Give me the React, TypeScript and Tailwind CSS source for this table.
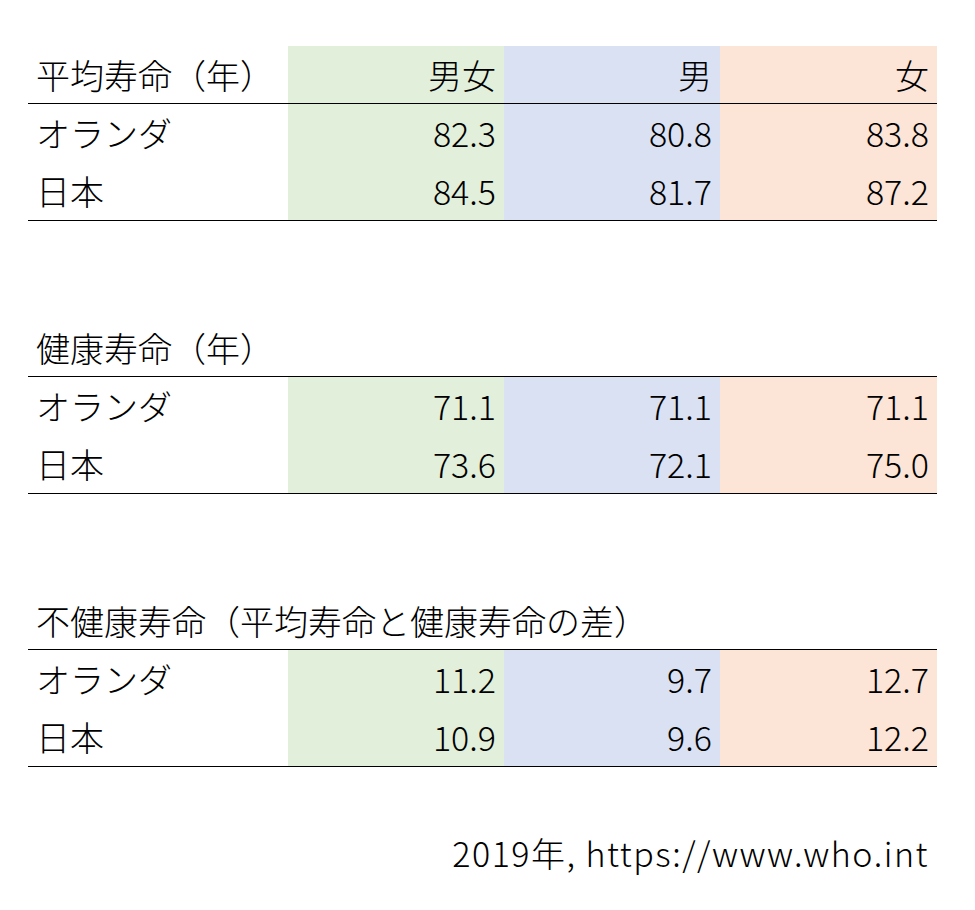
const FONT = "font-['Noto_Sans_CJK_JP','Noto_Sans',sans-serif]";

type Row = { label: string; values: [string, string, string] };

const COLS = ["bg-[#e2efda]", "bg-[#d9e1f2]", "bg-[#fce4d6]"];

function Cells({ label, values, bordered }: Row & { bordered?: boolean }) {
  return (
    <div
      className={`grid grid-cols-[260px_216px_216px_217px] h-[58px] ${
        bordered ? "border-b border-black" : ""
      }`}
    >
      <div className="flex items-center pl-2">{label}</div>
      {values.map((v, i) => (
        <div key={i} className={`flex items-center justify-end pr-2 ${COLS[i]}`}>
          {v}
        </div>
      ))}
    </div>
  );
}

function Table({
  title,
  header,
  rows,
}: {
  title: string;
  header?: [string, string, string];
  rows: Row[];
}) {
  return (
    <div className="flex flex-col">
      {header ? (
        <Cells label={title} values={header} bordered />
      ) : (
        <div className="flex h-[58px] items-center border-b border-black pl-2">{title}</div>
      )}
      <div className="border-b border-black">
        {rows.map((r) => (
          <Cells key={r.label} {...r} />
        ))}
      </div>
    </div>
  );
}

export default function App() {
  return (
    <div
      className={`${FONT} h-[910px] w-[975px] bg-white pl-[28px] pt-[46px] text-[34px] font-light leading-none text-black`}
    >
      <div className="flex w-[909px] flex-col gap-[98px]">
        <Table
          title="平均寿命（年）"
          header={["男女", "男", "女"]}
          rows={[
            { label: "オランダ", values: ["82.3", "80.8", "83.8"] },
            { label: "日本", values: ["84.5", "81.7", "87.2"] },
          ]}
        />
        <Table
          title="健康寿命（年）"
          rows={[
            { label: "オランダ", values: ["71.1", "71.1", "71.1"] },
            { label: "日本", values: ["73.6", "72.1", "75.0"] },
          ]}
        />
        <Table
          title="不健康寿命（平均寿命と健康寿命の差）"
          rows={[
            { label: "オランダ", values: ["11.2", "9.7", "12.7"] },
            { label: "日本", values: ["10.9", "9.6", "12.2"] },
          ]}
        />
      </div>
      <div className="mt-[57px] flex h-[58px] w-[909px] items-center justify-end pr-2 tracking-[1.5px]">
        2019年, https://www.who.int
      </div>
    </div>
  );
}
